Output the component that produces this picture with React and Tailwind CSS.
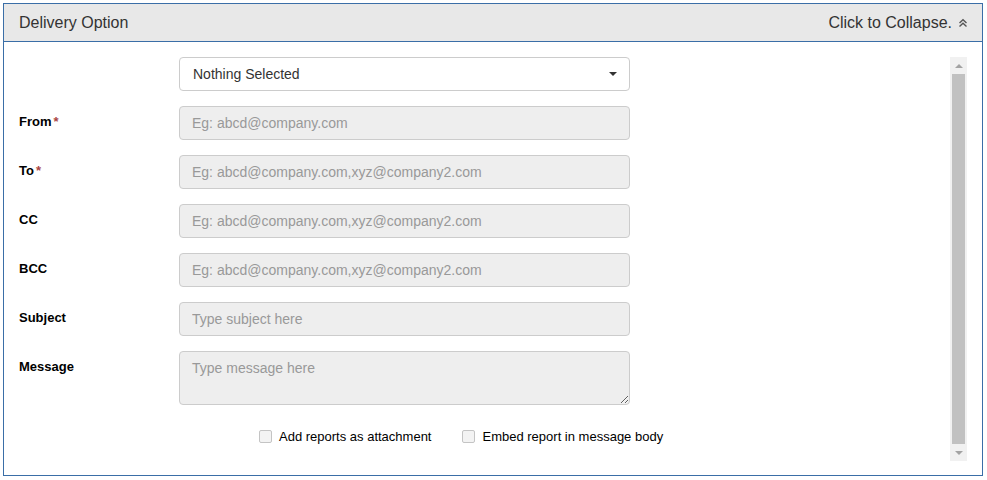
import React from 'react';

const fields = [
  { label: 'From', required: true, placeholder: 'Eg: abcd@company.com' },
  { label: 'To', required: true, placeholder: 'Eg: abcd@company.com,xyz@company2.com' },
  { label: 'CC', placeholder: 'Eg: abcd@company.com,xyz@company2.com' },
  { label: 'BCC', placeholder: 'Eg: abcd@company.com,xyz@company2.com' },
  { label: 'Subject', placeholder: 'Type subject here' },
];

const Label = ({ children, required }) => (
  <div className="w-[160px] shrink-0 pt-[7px] text-[13px] leading-[18px] font-bold text-black">
    {children}
    {required && <span className="ml-[2px] text-[#a94442]">*</span>}
  </div>
);

const App = () => {
  return (
    <div className="pl-[3px] pt-[3px] font-['Liberation_Sans',Arial,sans-serif]">
      <div className="w-[980px] h-[473px] border border-[#3a6ea7] bg-white flex flex-col">
        <div className="h-[38px] shrink-0 bg-[#e8e8e8] border-b border-[#3a6ea7] flex items-center justify-between pl-[15px] pr-[14px] text-[16px] text-[#333]">
          <span>Delivery Option</span>
          <span className="flex items-center gap-[6px]">
            Click to Collapse.
            <svg width="10" height="10" viewBox="0 0 10 10" fill="none" stroke="#555" strokeWidth="1.4">
              <path d="M1.5 5 L5 1.8 L8.5 5" />
              <path d="M1.5 8.5 L5 5.3 L8.5 8.5" />
            </svg>
          </span>
        </div>

        <div className="flex flex-1 pt-[15px] pb-[14px] pl-[15px] pr-[15px]">
          <div className="flex-1 flex flex-col">
            <div className="flex">
              <div className="w-[160px] shrink-0" />
              <div className="w-[451px] h-[34px] border border-[#ccc] rounded-[4px] bg-white flex items-center justify-between pl-[13px] pr-[12px] text-[14px] text-[#333]">
                <span>Nothing Selected</span>
                <span className="w-0 h-0 border-l-[4px] border-r-[4px] border-t-[4px] border-l-transparent border-r-transparent border-t-[#333]" />
              </div>
            </div>

            {fields.map((f) => (
              <div key={f.label} className="flex mt-[15px]">
                <Label required={f.required}>{f.label}</Label>
                <input
                  disabled
                  placeholder={f.placeholder}
                  className="w-[451px] h-[34px] border border-[#ccc] rounded-[4px] bg-[#eee] px-[12px] text-[14px] placeholder:text-[#999] outline-none"
                />
              </div>
            ))}

            <div className="flex mt-[15px]">
              <Label>Message</Label>
              <textarea
                disabled
                placeholder="Type message here"
                className="w-[451px] h-[54px] border border-[#ccc] rounded-[4px] bg-[#eee] px-[12px] py-[6px] text-[14px] leading-[20px] placeholder:text-[#999] outline-none resize-y"
              />
            </div>

            <div className="flex items-center mt-[22px] ml-[240px] text-[13px] text-black">
              <label className="flex items-center">
                <span className="w-[13px] h-[13px] border border-[#c4c4c4] rounded-[2px] bg-[#f3f3f3]" />
                <span className="ml-[7px]">Add reports as attachment</span>
              </label>
              <label className="flex items-center ml-[31px]">
                <span className="w-[13px] h-[13px] border border-[#c4c4c4] rounded-[2px] bg-[#f3f3f3]" />
                <span className="ml-[7px]">Embed report in message body</span>
              </label>
            </div>
          </div>

          <div className="w-[17px] shrink-0 bg-[#f1f1f1] flex flex-col items-center">
            <div className="h-[17px] w-full flex items-center justify-center">
              <span className="w-0 h-0 border-l-[4px] border-r-[4px] border-b-[4px] border-l-transparent border-r-transparent border-b-[#a3a3a3]" />
            </div>
            <div className="flex-1 w-[13px] bg-[#c1c1c1]" />
            <div className="h-[17px] w-full flex items-center justify-center">
              <span className="w-0 h-0 border-l-[4px] border-r-[4px] border-t-[4px] border-l-transparent border-r-transparent border-t-[#a3a3a3]" />
            </div>
          </div>
        </div>
      </div>
    </div>
  );
};

export default App;
